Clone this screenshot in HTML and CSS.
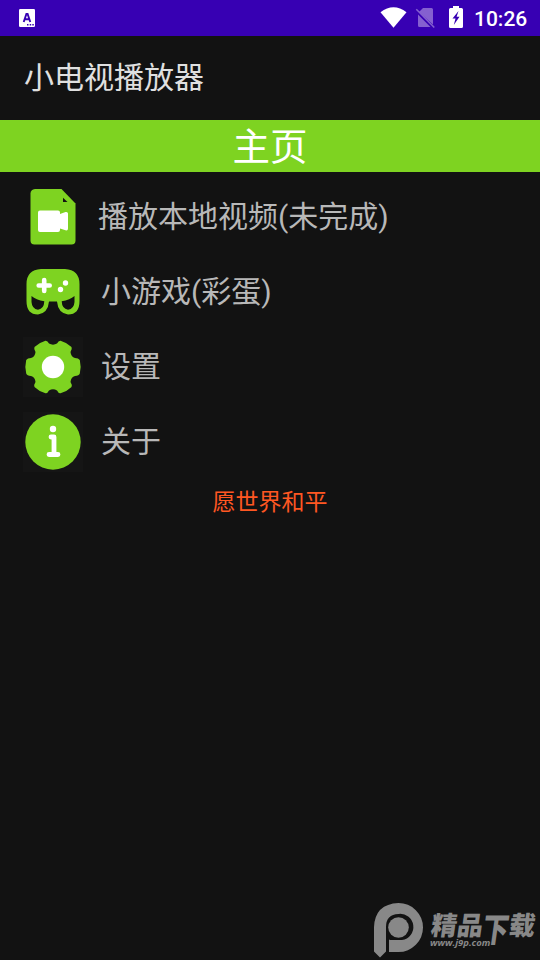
FILE: index.html
```html
<!DOCTYPE html>
<html lang="zh-CN">
<head>
<meta charset="utf-8">
<title>小电视播放器</title>
<link rel="stylesheet" href="styles.css">
</head>
<body>
<header class="status">
  <svg class="status-app" width="16" height="18" viewBox="0 0 16 18"><rect width="16" height="18" rx="1.2" fill="#fff"/><path d="M4.7 13 7.4 5h1.2l2.7 8M5.8 10.2h4.4" fill="none" stroke="#3700b3" stroke-width="1.9"/><path d="M8 15h1.5v1.5H8zM10.7 15h1.5v1.5h-1.5zM13.3 15h1.5v1.5h-1.5z" fill="#3700b3"/></svg>
  <div class="status-right">
    <svg width="160" height="36" viewBox="380 0 160 36" class="status-icons">
      <path d="M380.5 12.3Q393.5 2.200 406.500 12.300L393.500 27.700Z" fill="#fff"/>
      <path d="M423 8h8.500q1.500 0 1.500 1.500V24.500L419 12ZM418 14.500 430.500 27H419.500q-1.500 0-1.500-1.500Z" fill="#8560d0"/>
      <path d="M416.300 9.300 434.300 27.500" stroke="#8560d0" stroke-width="1.500"/>
      <path d="M453 6h6v2h2.500q1.500 0 1.500 1.500v17q0 1.500-1.500 1.500h-11q-1.500 0-1.500-1.500v-17q0-1.500 1.500-1.500H453Z" fill="#fff"/>
      <path d="M458.500 11 452.500 18.500H455.500L453.800 25 459.500 16.800H456.600Z" fill="#3700b3"/>
    </svg>
    <span class="clock">10:26</span>
  </div>
</header>
<div class="appbar">小电视播放器</div>
<h1 class="banner">主页</h1>
<main>
  <ul class="menu">
    <li class="item item-video">
      <svg class="icon" viewBox="0 0 60 60"><path d="M12 2H38.500L52.500 16.500V53.500Q52.500 57.500 48.500 57.500H11.500Q7.500 57.500 7.500 53.500V6.500Q7.500 2.500 12 2Z" fill="#7ed321"/><path d="M40 10.700 44.500 15H40Z" fill="#121212"/><path d="M17 23.500H35Q37 23.500 37 25.500V27L42.500 25Q45 24.500 45 26.500V41.500Q45 44 42.500 43.300L37 41.500V43Q37 45 35 45H17Q15 45 15 43V25.500Q15 23.500 17 23.500Z" fill="#fff"/></svg>
      <span>播放本地视频(未完成)</span>
    </li>
    <li class="item">
      <svg class="icon" viewBox="0 0 60 60"><path d="M18 7H42Q56.500 8 56.500 22V39Q56.500 52.500 45 52.500Q35 51 34 39.500H26Q25 51 15 52.500Q3.500 52.500 3.500 39V22Q3.500 8 18 7Z" fill="#7ed321"/><path d="M8.500 34Q13 38 21.300 39.300Q21 47 15 47.700Q9 47 8.500 40ZM51.500 34Q47 38 38.700 39.300Q39 47 45 47.700Q51 47 51.500 40Z" fill="#121212"/><path d="M21.200 18V29M15.700 23.500H26.700" stroke="#fff" stroke-width="4.600" stroke-linecap="round"/><circle cx="42.500" cy="21" r="2.700" fill="#fff"/><circle cx="37.500" cy="27.500" r="2.700" fill="#fff"/></svg>
      <span>小游戏(彩蛋)</span>
    </li>
    <li class="item">
      <svg class="icon icon-boxed" viewBox="0 0 60 60"><path d="M22.500 3.700Q24.500 3.500 26 6.500Q30 8.800 34 6.500Q35.500 3.500 37.500 3.700Q44 5.500 48.500 10Q49.500 12 47.500 15Q48 20 52 21Q55.500 21.200 56.800 23Q58.500 30 56.800 36.500Q56 38.500 52 39Q48 40 47.500 45Q49.500 48 48.500 50Q44 54.500 37.500 56.300Q35.500 56.500 34 53.500Q30 51.200 26 53.500Q24.500 56.500 22.500 56.300Q16 54.500 11.500 50Q10.500 48 12.500 45Q12 40 8 39Q4 38.500 3.200 36.500Q1.500 30 3.200 23Q4.500 21.200 8 21Q12 20 12.500 15Q10.500 12 11.500 10Q16 5.500 22.500 3.700Z" fill="#7ed321"/><circle cx="30" cy="30" r="11.200" fill="#fff"/></svg>
      <span>设置</span>
    </li>
    <li class="item">
      <svg class="icon icon-boxed" viewBox="0 0 60 60"><circle cx="30" cy="30" r="27.700" fill="#7ed321"/><circle cx="30" cy="17" r="3.200" fill="#fff"/><path d="M28 25H31V42M26 42.500H35" fill="none" stroke="#fff" stroke-width="4.800" stroke-linecap="round" stroke-linejoin="round"/></svg>
      <span>关于</span>
    </li>
  </ul>
  <p class="wish">愿世界和平</p>
</main>
<div class="watermark">
  <svg width="50" height="56" viewBox="0 0 50 56"><path fill-rule="evenodd" d="M24.500 0A24.500 24.500 0 1 1 24.500 49H15V40L18.500 38.500H15V37H28A13 13 0 0 0 24.500 11Q12 11.500 12 24V48.500L6 54.500 0 48.500V24Q1 1 24.500 0Z"/><circle cx="24.500" cy="24.500" r="10.300"/><path d="M15 36.500 22 39.500 15 46Z"/></svg>
  <div class="mark-text">
    <div class="mark-name"><span>精品</span><span class="mark-big">下</span><span>载</span></div>
    <div class="mark-url">www.j9p.com</div>
  </div>
</div>
</body>
</html>
```

FILE: styles.css
```css
* { box-sizing: border-box; }
body {
  margin: 0;
  height: 960px;
  overflow: hidden;
  position: relative;
  background: #121212;
  font-family: Roboto, "Noto Sans CJK SC", sans-serif;
}
.status {
  height: 36px;
  display: flex;
  align-items: center;
  justify-content: space-between;
  padding-left: 19px;
  background: #3700b3;
}
.status-right { display: flex; width: 160px; position: relative; }
.status-icons { flex: none; }
.clock {
  position: absolute;
  left: 94px;
  top: 1px;
  color: #fff;
  font-size: 21px;
  line-height: 36px;
  font-weight: 500;
}
.appbar {
  height: 84px;
  padding-left: 24px;
  line-height: 84px;
  font-size: 30px;
  color: #e0e0e0;
}
.banner {
  margin: 0;
  height: 52px;
  line-height: 54px;
  text-align: center;
  font-size: 37.5px;
  font-weight: 400;
  color: #fff;
  background: #7ed321;
}
.menu { list-style: none; margin: 0; padding: 7px 0 0 23px; }
.item {
  height: 75px;
  display: flex;
  align-items: center;
  gap: 18px;
  padding-top: 1px;
  font-size: 30px;
  line-height: 44px;
  color: #b8b8b8;
}
.item-video { gap: 15px; }
.icon { width: 60px; height: 60px; flex: none; }
.icon-boxed { background: #151515; }
.wish {
  margin: 6px 0 0;
  text-align: center;
  font-size: 23px;
  line-height: 36px;
  color: #ff5722;
}
.watermark {
  position: absolute;
  left: 374px;
  top: 903px;
  display: flex;
  gap: 8px;
  color: #888;
}
.watermark svg { flex: none; fill: #888; }
.mark-name {
  display: flex;
  height: 34px;
  padding-top: 8px;
  font-family: "Noto Sans CJK SC", sans-serif;
  font-size: 26px;
  line-height: 26px;
  font-weight: 900;
  transform: skewX(-8deg);
  white-space: nowrap;
}
.mark-big { transform: scaleY(1.3); transform-origin: top; }
.mark-url {
  font-family: "Open Sans", sans-serif;
  font-size: 9.5px;
  line-height: 12px;
  font-weight: 700;
  font-style: italic;
  margin-left: -2px;
}
```
